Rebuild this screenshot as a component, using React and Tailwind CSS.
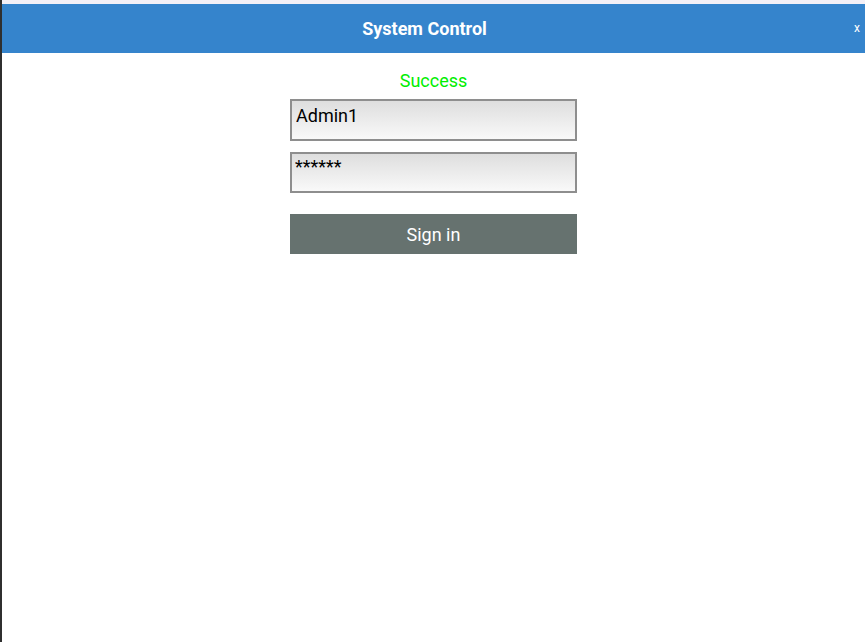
export default function App() {
  return (
    <div className="flex h-[642px] w-[865px] bg-[#f3f0f7] font-['Roboto',sans-serif]">
      <div className="w-[2px] shrink-0 bg-[#2f2f2f]" />
      <div className="flex flex-1 flex-col pt-[4px]">
        <div className="relative flex h-[49px] items-center justify-center bg-[#3584cc] pr-[18px]">
          <span className="text-[18px] font-bold text-white">System Control</span>
          <span className="absolute right-[5px] top-[18px] text-[12px] leading-none text-white">x</span>
        </div>
        <div className="flex flex-1 flex-col items-center bg-white pt-[18px]">
          <div className="text-[18px] leading-[20px] text-[#00ee00]">Success</div>
          <input
            readOnly
            value="Admin1"
            className="mt-[8px] h-[42px] w-[287px] border-2 border-[#8e8e8e] bg-gradient-to-b from-[#dedede] to-[#f9f9f9] px-[4px] pb-[10px] text-[18px] text-black outline-none"
          />
          <input
            readOnly
            value="******"
            className="mt-[11px] h-[41px] w-[287px] border-2 border-[#8e8e8e] bg-gradient-to-b from-[#dedede] to-[#f9f9f9] px-[3px] pb-[12px] text-[18px] text-black outline-none"
          />
          <button className="mt-[21px] h-[40px] w-[287px] bg-[#66726f] text-[18px] text-white">
            Sign in
          </button>
        </div>
      </div>
    </div>
  );
}
